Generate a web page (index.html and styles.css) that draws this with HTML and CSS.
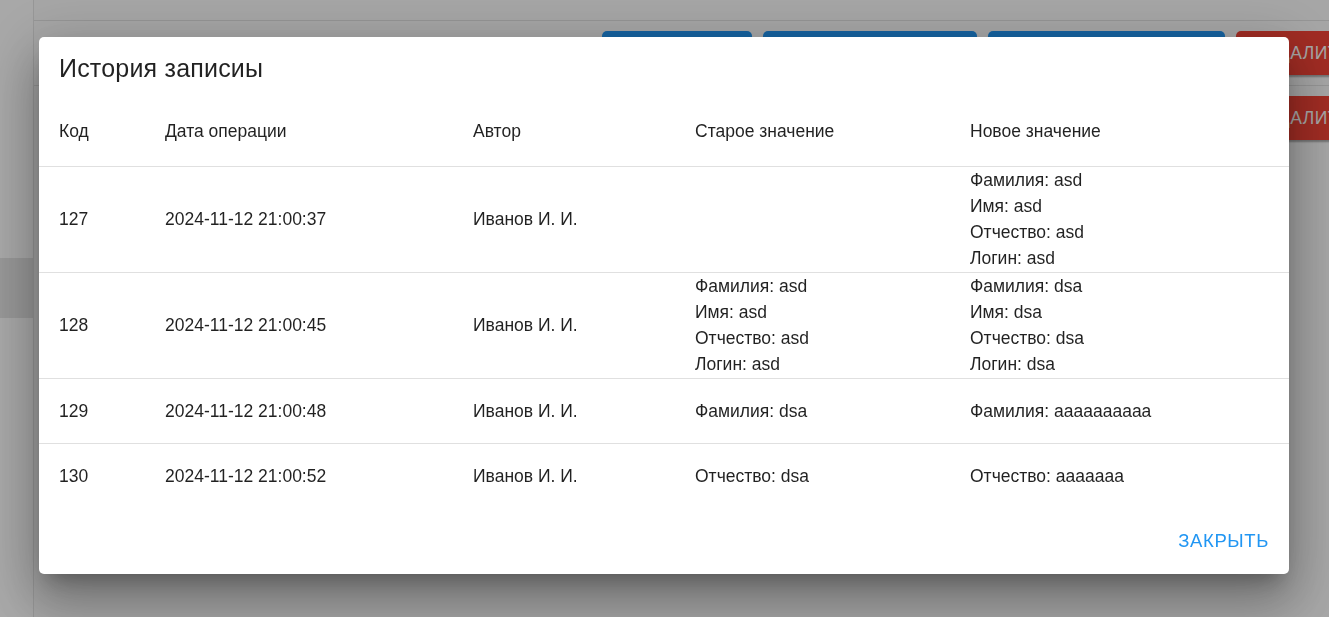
FILE: index.html
```html
<!DOCTYPE html>
<html lang="ru">
<head>
<meta charset="utf-8">
<title>История записи</title>
<link rel="stylesheet" href="styles.css">
</head>
<body>
<div class="page">
  <aside class="sidebar">
    <div class="nav-item"></div>
    <div class="nav-item"></div>
    <div class="nav-item"></div>
    <div class="nav-item"></div>
    <div class="nav-item active"></div>
  </aside>
  <main class="main">
    <div class="topbar"></div>
    <div class="toolbar">
      <button class="btn btn-blue w1">Назад</button>
      <button class="btn btn-blue w2">Сохранить</button>
      <button class="btn btn-blue w3">История</button>
      <button class="btn btn-red w4">Удалить</button>
    </div>
    <div class="list-row">
      <button class="btn btn-red w4">Удалить</button>
    </div>
  </main>
</div>

<div class="backdrop"></div>

<div class="dialog" role="dialog">
  <h2 class="dialog-title">История записиы</h2>
  <div class="grid">
    <div class="row head">
      <div class="cell">Код</div>
      <div class="cell">Дата операции</div>
      <div class="cell">Автор</div>
      <div class="cell">Старое значение</div>
      <div class="cell">Новое значение</div>
    </div>
    <div class="row multi">
      <div class="cell">127</div>
      <div class="cell">2024-11-12 21:00:37</div>
      <div class="cell">Иванов И. И.</div>
      <div class="cell"></div>
      <div class="cell lines">
        <div>Фамилия: asd</div>
        <div>Имя: asd</div>
        <div>Отчество: asd</div>
        <div>Логин: asd</div>
      </div>
    </div>
    <div class="row multi">
      <div class="cell">128</div>
      <div class="cell">2024-11-12 21:00:45</div>
      <div class="cell">Иванов И. И.</div>
      <div class="cell lines">
        <div>Фамилия: asd</div>
        <div>Имя: asd</div>
        <div>Отчество: asd</div>
        <div>Логин: asd</div>
      </div>
      <div class="cell lines">
        <div>Фамилия: dsa</div>
        <div>Имя: dsa</div>
        <div>Отчество: dsa</div>
        <div>Логин: dsa</div>
      </div>
    </div>
    <div class="row">
      <div class="cell">129</div>
      <div class="cell">2024-11-12 21:00:48</div>
      <div class="cell">Иванов И. И.</div>
      <div class="cell">Фамилия: dsa</div>
      <div class="cell">Фамилия: aaaaaaaaaa</div>
    </div>
    <div class="row last">
      <div class="cell">130</div>
      <div class="cell">2024-11-12 21:00:52</div>
      <div class="cell">Иванов И. И.</div>
      <div class="cell">Отчество: dsa</div>
      <div class="cell">Отчество: aaaaaaa</div>
    </div>
  </div>
  <div class="actions">
    <button class="text-btn">Закрыть</button>
  </div>
</div>
</body>
</html>
```

FILE: styles.css
```css
* { box-sizing: border-box; }

html, body {
  margin: 0;
  height: 100%;
  overflow: hidden;
  background: #ffffff;
  font-family: "Liberation Sans", Arial, sans-serif;
}

.page {
  display: flex;
  height: 617px;
  width: 1460px;
}

.sidebar {
  width: 34px;
  flex-shrink: 0;
  border-right: 1px solid #e6e6e6;
  display: flex;
  flex-direction: column;
  padding-top: 18px;
}

.nav-item {
  height: 60px;
}

.nav-item.active {
  background: #e6e6e6;
}

.main {
  flex: 1;
  display: flex;
  flex-direction: column;
  background: #fcfcfc;
}

.topbar {
  height: 21px;
  border-bottom: 1px solid #e3e3e3;
}

.toolbar {
  display: flex;
  gap: 11px;
  padding: 10px 0 10px 568px;
  border-bottom: 1px solid #e3e3e3;
}

.list-row {
  display: flex;
  padding: 10px 0 10px 1202px;
}

.btn {
  flex-shrink: 0;
  height: 44px;
  border: 0;
  border-radius: 5px;
  color: #ffffff;
  font-family: "Liberation Sans", Arial, sans-serif;
  font-size: 17.5px;
  font-weight: 500;
  letter-spacing: 0.5px;
  text-transform: uppercase;
  text-align: left;
  white-space: nowrap;
  overflow: hidden;
  padding: 0 20px 0 31px;
  box-shadow: 0 4px 2px -2px rgba(0,0,0,0.2), 0 2px 2px 0 rgba(0,0,0,0.14);
}

.btn-blue { background: #2196f3; color: #2196f3; }
.btn-red { background: #f44336; }

.w1 { width: 150px; }
.w2 { width: 214px; }
.w3 { width: 237px; }
.w4 { width: 150px; }

.backdrop {
  position: fixed;
  inset: 0;
  background: rgba(0, 0, 0, 0.34);
}

.dialog {
  position: fixed;
  left: 39px;
  top: 37px;
  width: 1250px;
  height: 537px;
  background: #ffffff;
  border-radius: 5px;
  display: flex;
  flex-direction: column;
  color: rgba(0, 0, 0, 0.87);
  box-shadow:
    0 14px 19px -9px rgba(0,0,0,0.28),
    0 30px 48px 4px rgba(0,0,0,0.2),
    0 11px 58px 10px rgba(0,0,0,0.16);
}

.dialog-title {
  margin: 0;
  padding: 11px 20px 8px;
  font-size: 25px;
  font-weight: 400;
  line-height: 40px;
  letter-spacing: 0.2px;
}

.grid {
  display: flex;
  flex-direction: column;
}

.row {
  display: grid;
  grid-template-columns: 106px 308px 222px 275px 339px;
  align-items: center;
  min-height: 65px;
  border-bottom: 1px solid #e0e0e0;
  font-size: 17.5px;
  line-height: 26px;
}

.row.head {
  min-height: 71px;
}

.row.multi {
  padding-bottom: 1px;
}

.row.last {
  border-bottom: 0;
  min-height: 64px;
}

.cell {
  padding-left: 20px;
}

.actions {
  display: flex;
  justify-content: flex-end;
  padding: 10px;
}

.text-btn {
  border: 0;
  background: transparent;
  color: #2196f3;
  font-family: "Liberation Sans", Arial, sans-serif;
  font-size: 18.5px;
  font-weight: 500;
  letter-spacing: 0.6px;
  line-height: 30.5px;
  text-transform: uppercase;
  padding: 7.5px 10px;
}
```
